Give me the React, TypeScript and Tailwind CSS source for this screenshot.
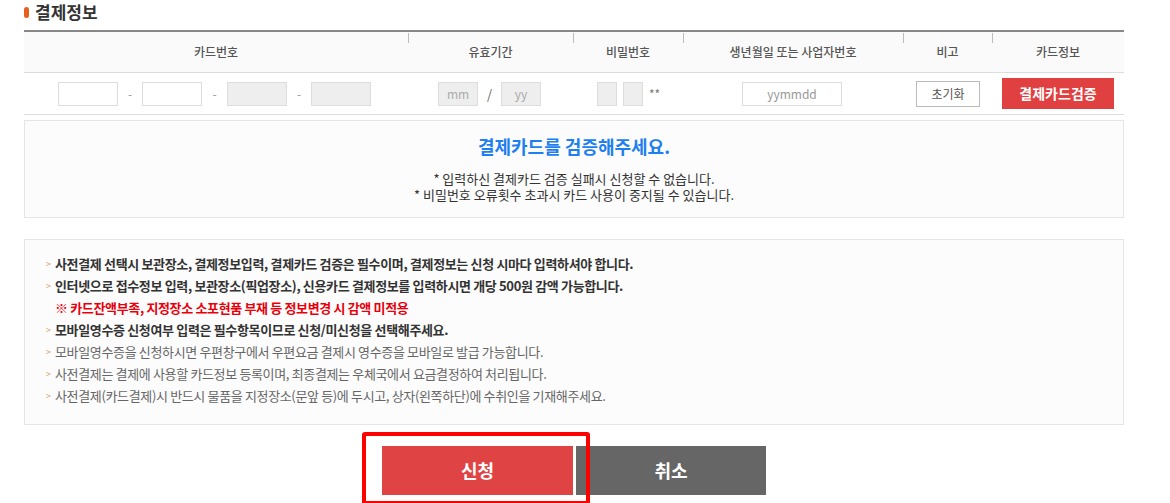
import React from 'react'

const font = { fontFamily: '"Noto Sans CJK KR", "Noto Sans", sans-serif' }

function HeadCell({ label, w, sep = true }: { label: string; w: string; sep?: boolean }) {
  return (
    <div className={`relative flex items-center justify-center ${w}`}>
      {sep && <span className="absolute left-0 top-[1px] h-[10px] w-px bg-[#bbb]" />}
      <span className="text-[12px] font-medium text-[#555]">{label}</span>
    </div>
  )
}

const notes: { text: string; kind: 'bold' | 'red' | 'normal' }[] = [
  { text: '사전결제 선택시 보관장소, 결제정보입력, 결제카드 검증은 필수이며, 결제정보는 신청 시마다 입력하셔야 합니다.', kind: 'bold' },
  { text: '인터넷으로 접수정보 입력, 보관장소(픽업장소), 신용카드 결제정보를 입력하시면 개당 500원 감액 가능합니다.', kind: 'bold' },
  { text: '※ 카드잔액부족, 지정장소 소포현품 부재 등 정보변경 시 감액 미적용', kind: 'red' },
  { text: '모바일영수증 신청여부 입력은 필수항목이므로 신청/미신청을 선택해주세요.', kind: 'bold' },
  { text: '모바일영수증을 신청하시면 우편창구에서 우편요금 결제시 영수증을 모바일로 발급 가능합니다.', kind: 'normal' },
  { text: '사전결제는 결제에 사용할 카드정보 등록이며, 최종결제는 우체국에서 요금결정하여 처리됩니다.', kind: 'normal' },
  { text: '사전결제(카드결제)시 반드시 물품을 지정장소(문앞 등)에 두시고, 상자(왼쪽하단)에 수취인을 기재해주세요.', kind: 'normal' },
]

export default function App() {
  return (
    <div className="min-h-[503px] w-[1170px] bg-white" style={font}>
      <div className="ml-[24px] w-[1100px]">
        <h2 className="flex h-[30px] items-center gap-[6px] pb-[6px]">
          <span className="h-[11px] w-[5px] rounded-full bg-[#e8601c]" />
          <span className="text-[17px] font-bold text-[#333]">결제정보</span>
        </h2>

        <div className="border-t-2 border-[#888]">
          <div className="flex h-[41px] border-b border-[#ddd] bg-[#fafafa]">
            <HeadCell label="카드번호" w="w-[384px]" sep={false} />
            <HeadCell label="유효기간" w="w-[165px]" />
            <HeadCell label="비밀번호" w="w-[110px]" />
            <HeadCell label="생년월일 또는 사업자번호" w="w-[220px]" />
            <HeadCell label="비고" w="w-[89px]" />
            <HeadCell label="카드정보" w="w-[132px]" />
          </div>
          <div className="flex h-[42px] items-center border-b border-[#ddd] text-[12px] text-[#999]">
            <div className="flex w-[384px] items-center pl-[34px]">
              <div className="h-[24px] w-[60px] border border-[#ddd] bg-white" />
              <span className="w-[24px] text-center">-</span>
              <div className="h-[24px] w-[60px] border border-[#ddd] bg-white" />
              <span className="w-[25px] text-center">-</span>
              <div className="h-[24px] w-[60px] border border-[#ddd] bg-[#eee]" />
              <span className="w-[24px] text-center">-</span>
              <div className="h-[24px] w-[60px] border border-[#ddd] bg-[#eee]" />
            </div>
            <div className="flex w-[165px] items-center pl-[30px]">
              <div className="flex h-[24px] w-[40px] items-center justify-center border border-[#ddd] bg-[#eee] text-[12px] text-[#aaa]">mm</div>
              <span className="w-[23px] text-center text-[13px] text-[#666]">/</span>
              <div className="flex h-[24px] w-[40px] items-center justify-center border border-[#ddd] bg-[#eee] text-[12px] text-[#aaa]">yy</div>
            </div>
            <div className="flex w-[110px] items-center pl-[24px]">
              <div className="h-[24px] w-[20px] border border-[#ddd] bg-[#eee]" />
              <div className="ml-[6px] h-[24px] w-[20px] border border-[#ddd] bg-[#eee]" />
              <span className="ml-[6px] text-[12px] text-[#777]">**</span>
            </div>
            <div className="flex w-[220px] items-center pl-[59px]">
              <div className="flex h-[24px] w-[100px] items-center justify-center border border-[#ddd] bg-white text-[12px] text-[#999]">yymmdd</div>
            </div>
            <div className="flex w-[89px] items-center pl-[13px]">
              <div className="flex h-[26px] w-[64px] items-center justify-center border border-[#bbb] bg-white text-[12px] text-[#555]">초기화</div>
            </div>
            <div className="flex w-[132px] items-center pl-[10px]">
              <div className="flex h-[31px] w-[112px] items-center justify-center bg-[#e04040] text-[14px] font-bold text-white">결제카드검증</div>
            </div>
          </div>
        </div>

        <div className="mt-[5px] flex h-[98px] flex-col items-center border border-[#e5e5e5] bg-[#fcfcfc] pt-[12px]">
          <p className="text-[18px] font-bold leading-[26px] text-[#1e7ff0]">결제카드를 검증해주세요.</p>
          <p className="mt-[12px] text-[13px] leading-[16px] text-[#333]">* 입력하신 결제카드 검증 실패시 신청할 수 없습니다.</p>
          <p className="text-[13px] leading-[16px] text-[#333]">* 비밀번호 오류횟수 초과시 카드 사용이 중지될 수 있습니다.</p>
        </div>

        <div className="mt-[21px] h-[186px] border border-[#e5e5e5] bg-[#fcfcfc] pl-[21px] pt-[13px]">
          {notes.map((n) => (
            <div key={n.text} className="flex h-[22px] items-center text-[13px] tracking-[-0.35px]">
              {n.kind === 'red' ? (
                <span className="pl-[9px] font-bold text-[#e8000b]">{n.text}</span>
              ) : (
                <>
                  <span className="w-[9px] text-[9px] text-[#d9a06a]">&gt;</span>
                  <span className={n.kind === 'bold' ? 'font-bold text-[#333]' : 'text-[#666]'}>{n.text}</span>
                </>
              )}
            </div>
          ))}
        </div>

        <div className="mt-[21px] flex justify-center gap-[3px]">
          <div className="relative">
            <div className="flex h-[49px] w-[191px] items-center justify-center bg-[#e04343] text-[18px] font-bold text-white">신청</div>
            <div className="absolute left-[-20px] top-[-14px] h-[73px] w-[228px] rounded-[3px] border-[4px] border-[#ff0000]" />
          </div>
          <div className="flex h-[49px] w-[190px] items-center justify-center bg-[#666] text-[18px] font-bold text-white">취소</div>
        </div>
      </div>
    </div>
  )
}
